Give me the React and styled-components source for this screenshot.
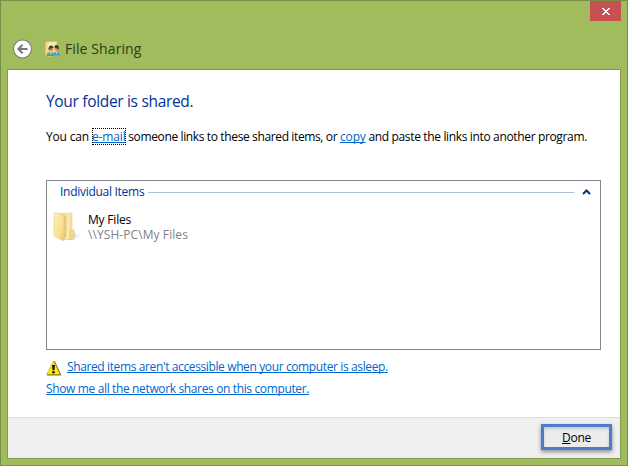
import React from "react";
import styled, { createGlobalStyle } from "styled-components";

const GlobalStyle = createGlobalStyle`
  * { box-sizing: border-box; }
  body { margin: 0; overflow: hidden; }
`;

const Window = styled.div`
  width: 628px;
  height: 466px;
  display: flex;
  flex-direction: column;
  padding: 0 6px 6px;
  background: #a0bc5c;
  border: 1px solid #7a8f46;
  font: 12px/16px "Open Sans", "Noto Sans", sans-serif;
  color: #000;
  white-space: nowrap;
`;

const TitleBar = styled.header`
  height: 68px;
  flex: none;
  display: flex;
  flex-direction: column;
`;

const CloseButton = styled.button`
  align-self: flex-end;
  width: 31px;
  height: 20px;
  padding: 0;
  border: 0;
  background: #c75050;
  display: flex;
  align-items: center;
  justify-content: center;
`;

const Heading = styled.div`
  display: flex;
  align-items: center;
  height: 22px;
  margin: 17px 0 0 6px;
`;

const WindowTitle = styled.h1`
  margin: 0 0 0 4px;
  font-size: 14px;
  line-height: 22px;
  font-weight: 400;
  letter-spacing: 0.1px;
  color: #303a1c;
`;

const FolderUsersIcon = styled.svg`
  margin-left: 12px;
`;

const Panel = styled.main`
  flex: 1;
  display: flex;
  flex-direction: column;
  background: #fff;
  border: 1px solid #849b4b;
`;

const Content = styled.section`
  flex: 1;
  padding: 20px 19px 0 38px;
`;

const Title = styled.h2`
  margin: 0;
  font-size: 15.5px;
  line-height: 22px;
  font-weight: 400;
  letter-spacing: -0.32px;
  color: #003399;
`;

const Text = styled.p`
  margin: ${(p) => p.$margin || "0"};
  letter-spacing: ${(p) => p.$spacing || "0"};
`;

const Run = styled.span`
  letter-spacing: ${(p) => p.$spacing};
`;

const Link = styled.a`
  color: #0066cc;
  text-decoration: underline;
  text-decoration-thickness: 1px;
  text-underline-offset: 1px;
  text-decoration-skip-ink: none;
  outline: ${(p) => (p.$focused ? "1px dotted #000" : "none")};
  outline-offset: -1px;
`;

const ItemList = styled.div`
  width: 555px;
  height: 170px;
  margin-top: 35px;
  border: 1px solid #828790;
`;

const GroupHeader = styled.div`
  height: 16px;
  margin: 3px 9px 0 13px;
  display: flex;
  align-items: center;
  color: #003399;
  letter-spacing: -0.28px;
`;

const GroupRule = styled.span`
  flex: 1;
  height: 1px;
  margin: 0 8px 0 4px;
  background: #b0bfe0;
`;

const Item = styled.div`
  display: flex;
  margin: 11px 0 0 6px;
`;

const ItemText = styled.div`
  margin-left: 7px;
  padding-top: 1px;
  line-height: 15px;
  letter-spacing: -0.2px;
`;

const ItemPath = styled.div`
  color: #808080;
  letter-spacing: 0.08px;
`;

const Notice = styled.div`
  display: flex;
  height: 22px;
  margin-top: 9px;
`;

const WarningIcon = styled.svg`
  margin: 1px 5px 0 0;
`;

const Footer = styled.footer`
  height: 41px;
  padding: 6px 8px 0 0;
  display: flex;
  justify-content: flex-end;
  background: #efefef;
  border-top: 1px solid #dfdfdf;
`;

const DoneButton = styled.button`
  width: 71px;
  height: 26px;
  padding: 2px 0 0;
  border: 3px solid #4a7ecb;
  background: #ececec;
  box-shadow: 0 2px 4px rgba(0, 0, 0, 0.4), inset 0 2px 3px rgba(0, 0, 0, 0.15);
  color: #000;
  font: inherit;
  letter-spacing: -0.3px;
`;

const Mnemonic = styled.span`
  text-decoration: underline;
  text-underline-offset: 1px;
`;

function CloseGlyph() {
  return (
    <svg width="8" height="7" viewBox="0 0 8 7" shapeRendering="crispEdges">
      <path d="M0 0h2v1h1v1h2V1h1V0h2v1H7v1H6v1H5v1h1v1h1v1h1v1H6V6H5V5H3v1H2v1H0V6h1V5h1V4h1V3H2V2H1V1H0z" fill="#fff" />
    </svg>
  );
}

function BackIcon() {
  return (
    <svg width="20" height="20" viewBox="0 0 20 20">
      <circle cx="9.500" cy="10" r="9" fill="#fff" stroke="#7b7d78" strokeWidth="1.1" />
      <path d="M14.500 10H5.500M9.600 5.800L5.400 10l4.200 4.200" fill="none" stroke="#777" strokeWidth="2" />
    </svg>
  );
}

function UsersFolder() {
  return (
    <FolderUsersIcon width="16" height="16" viewBox="0 0 16 16">
      <path d="M.5 1.500L3 .5h9v14l-9 1-2.500-1z" fill="#f5d984" stroke="#e3c36a" strokeWidth=".5" />
      <path d="M3 1.500h8V7H3z" fill="#fbe9ac" />
      <path d="M1.500 15c0-3 1.500-4 4-4s4 1 4 4z" fill="#58a58c" />
      <path d="M8.500 14.500c0-3 1-4 3-4s3.500 1 3.500 4z" fill="#4b9bd2" />
      <circle cx="6" cy="8.300" r="2" fill="#c98c52" />
      <path d="M3.500 9c-.5-5.500 5-5.500 5-2L6 7.300z" fill="#493d31" />
      <circle cx="11.500" cy="7.500" r="2" fill="#c98c52" />
      <path d="M9.300 6.500c0-3.500 5-3.300 4.500 1l-1 1.500-.8-2z" fill="#35373b" />
      <path d="M5 11.500l.8 1.500.8-1.500m4.500-.5l.5 1.500.8-1.500" fill="none" stroke="#eee1b5" strokeWidth=".8" />
    </FolderUsersIcon>
  );
}

function FolderIcon() {
  return (
    <svg width="28" height="32" viewBox="0 0 28 32">
      <defs>
        <linearGradient id="front" x1="0" y1="0" x2="1" y2="1">
          <stop stopColor="#fff0b8" />
          <stop offset=".6" stopColor="#f8e195" />
          <stop offset="1" stopColor="#eccb69" />
        </linearGradient>
        <linearGradient id="inside">
          <stop stopColor="#e3c678" />
          <stop offset=".5" stopColor="#fbecb2" />
          <stop offset="1" stopColor="#f3d989" />
        </linearGradient>
        <linearGradient id="shade">
          <stop stopColor="#999" stopOpacity=".7" />
          <stop offset="1" stopColor="#ccc" stopOpacity="0" />
        </linearGradient>
      </defs>
      <path d="M15 29l6-7 7 2-7 5z" fill="url(#shade)" />
      <path d="M7 2.500l12-.5v17l2 1v7l-10 2z" fill="url(#inside)" stroke="#e5c877" strokeWidth=".5" />
      <path d="M11 5l2.500-1v21L11 28z" fill="#e2ca88" />
      <path d="M17 19.500l4-.5v6l-4 1.500z" fill="#f6dc8c" stroke="#ddb84d" strokeWidth=".5" />
      <path d="M1 2.500L2 2h5l4 5v22l-1 .8L1 25z" fill="url(#front)" stroke="#e2c575" strokeWidth=".5" />
    </svg>
  );
}

function Warning() {
  return (
    <WarningIcon width="16" height="16" viewBox="0 0 16 16">
      <path d="M7.500 1L14 14.500H.8z" fill="#ffec14" stroke="#d8c210" strokeLinejoin="round" />
      <path d="M8.300 1l6.500 14H1" fill="none" stroke="#59530e" strokeWidth=".8" />
      <path d="M6 5h3l-.6 5.200H6.600z" fill="#111" />
      <circle cx="7.500" cy="12.200" r="1.300" fill="#111" />
    </WarningIcon>
  );
}

export default function App() {
  return (
    <>
      <GlobalStyle />
      <Window>
        <TitleBar>
          <CloseButton aria-label="Close"><CloseGlyph /></CloseButton>
          <Heading>
            <BackIcon />
            <UsersFolder />
            <WindowTitle>File Sharing</WindowTitle>
          </Heading>
        </TitleBar>
        <Panel>
          <Content>
            <Title>Your folder is shared.</Title>
            <Text $margin="17px 0 0" $spacing="-0.16px">
              You can <Link $focused>e-mail</Link>
              <Run $spacing="-0.37px"> someone links to these shared items, or </Run>
              <Link>copy</Link>
              <Run $spacing="-0.35px"> and paste the links into another program.</Run>
            </Text>
            <ItemList>
              <GroupHeader>
                Individual Items
                <GroupRule />
                <svg width="9" height="6" viewBox="0 0 9 6">
                  <path d="M1 5l3.500-3.500L8 5" fill="none" stroke="#003399" strokeWidth="2" />
                </svg>
              </GroupHeader>
              <Item>
                <FolderIcon />
                <ItemText>
                  <div>My Files</div>
                  <ItemPath>{"\\\\YSH-PC\\My Files"}</ItemPath>
                </ItemText>
              </Item>
            </ItemList>
            <Notice>
              <Warning />
              <Text $spacing="-0.38px"><Link>Shared items aren't accessible when your computer is asleep.</Link></Text>
            </Notice>
            <Text $spacing="-0.36px"><Link>Show me all the network shares on this computer.</Link></Text>
          </Content>
          <Footer>
            <DoneButton><Mnemonic>D</Mnemonic>one</DoneButton>
          </Footer>
        </Panel>
      </Window>
    </>
  );
}
